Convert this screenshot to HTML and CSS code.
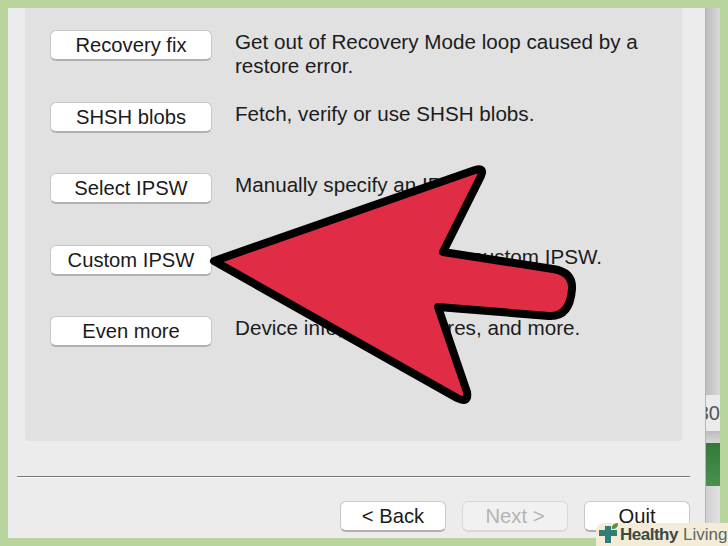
FILE: index.html
```html
<!DOCTYPE html>
<html lang="en">
<head>
<meta charset="utf-8">
<title>Custom IPSW</title>
<link rel="stylesheet" href="styles.css">
</head>
<body>
<div class="stage">
  <main class="window">
    <section class="panel">
      <div class="row"><button class="btn">Recovery fix</button><p class="desc">Get out of Recovery Mode loop caused by a restore error.</p></div>
      <div class="row"><button class="btn">SHSH blobs</button><p class="desc">Fetch, verify or use SHSH blobs.</p></div>
      <div class="row"><button class="btn">Select IPSW</button><p class="desc">Manually specify an IPSW.</p></div>
      <div class="row"><button class="btn">Custom IPSW</button><p class="desc">Create and restore with a custom IPSW.</p></div>
      <div class="row"><button class="btn">Even more</button><p class="desc">Device info, other features, and more.</p></div>
    </section>
    <div class="rule"></div>
    <footer class="actions">
      <button class="btn nav">&lt; Back</button>
      <button class="btn nav disabled">Next &gt;</button>
      <button class="btn nav">Quit</button>
    </footer>
  </main>
  <aside class="behind">
    <div class="behind-top"></div>
    <div class="behind-cell">30</div>
    <div class="behind-gap"></div>
    <div class="behind-green"></div>
    <div class="behind-bottom"></div>
  </aside>
  <svg class="arrow" width="728" height="546" viewBox="0 0 728 546" aria-hidden="true">
    <path d="M214 261 L475 170 Q485 167 481 176 L443 252 L553 269 Q573 272 572 289 Q570 317 549 316 L438 307 L467 392 Q469 404 457 398 Z" fill="#e02d45" stroke="#000" stroke-width="8" stroke-linejoin="round"/>
  </svg>
  <div class="badge">
    <svg class="badge-icon" width="21" height="22" viewBox="0 0 21 22" aria-hidden="true">
      <path d="M7 3h6v4h6v6h-6v7H7v-7H1V7h6z" fill="#2f7f78"/>
      <path d="M14 6c-1-3 2-6 6-6 0 4-2 6-6 6z" fill="#5d8f3f"/>
    </svg>
    <span class="brand-a">Healthy</span><span class="brand-b">Living</span>
  </div>
</div>
</body>
</html>
```
FILE: styles.css
```css
html, body { margin: 0; padding: 0; }
body { width: 728px; height: 546px; overflow: hidden; font-family: "Liberation Sans", Arial, sans-serif; }
.stage { position: relative; display: flex; width: 728px; height: 546px; padding: 8px; box-sizing: border-box; background: #bad49d; overflow: hidden; }
.window { width: 698px; height: 530px; flex: none; box-sizing: border-box; background: #ececec; padding-left: 17px; border-right: 1px solid #b5b5b5; }
.panel { width: 657px; height: 433px; box-sizing: border-box; background: #e1e1e1; border-radius: 0 0 4px 4px; padding-top: 22px; padding-left: 25px; }
.row { display: flex; gap: 23px; height: 71.5px; align-items: flex-start; }
.btn { flex: none; width: 162px; height: 31px; padding: 1px 0 0; border: 1px solid #c8c8c8; border-bottom: 2px solid #b0b0b0; border-radius: 6px; background: #fff; color: #1a1a1a; font: 20.2px/1 "Liberation Sans", Arial, sans-serif; box-sizing: border-box; }
.desc { margin: 0; width: 410px; color: #1c1c1c; font-size: 20.65px; line-height: 24px; }
.rule { height: 1px; margin: 35px 15px 0 -8px; width: 673px; background: #77787a; box-shadow: 0 1px 0 #fbfbfb; }
.actions { display: flex; justify-content: flex-end; gap: 16px; width: 665px; margin-top: 24px; }
.nav { width: 106px; padding: 0; }
.disabled { color: #b4b4b4; background: #f1f1f1; border-color: #d8d8d8; }
.behind { width: 14px; height: 530px; flex: none; display: flex; flex-direction: column; background: linear-gradient(90deg, #bdbdbd, #d9d9d9); overflow: hidden; }
.behind-top { height: 387px; flex: none; }
.behind-cell { height: 36px; flex: none; background: #ebebeb; color: #555; font-size: 20px; line-height: 36px; white-space: nowrap; direction: rtl; }
.behind-gap { height: 12px; flex: none; background: linear-gradient(#bcbcbc, #d8d8d8); }
.behind-green { height: 43px; flex: none; background: linear-gradient(#33793a, #4a9150); }
.behind-bottom { flex: 1; background: linear-gradient(90deg, #d0d0d0, #e2e2e2); }
.arrow { position: absolute; left: 0; top: 0; }
.badge { position: absolute; right: 0; bottom: 0; width: 132px; height: 23px; box-sizing: border-box; background: #f4ecd6; border-radius: 8px 0 0 0; display: flex; align-items: center; font-size: 17px; padding-left: 2px; white-space: nowrap; }
.badge-icon { flex: none; align-self: flex-start; }
.brand-a { font-weight: 700; color: #3b4a45; margin-left: 1px; letter-spacing: -0.5px; }
.brand-b { color: #5c6663; margin-left: 5px; }
```
